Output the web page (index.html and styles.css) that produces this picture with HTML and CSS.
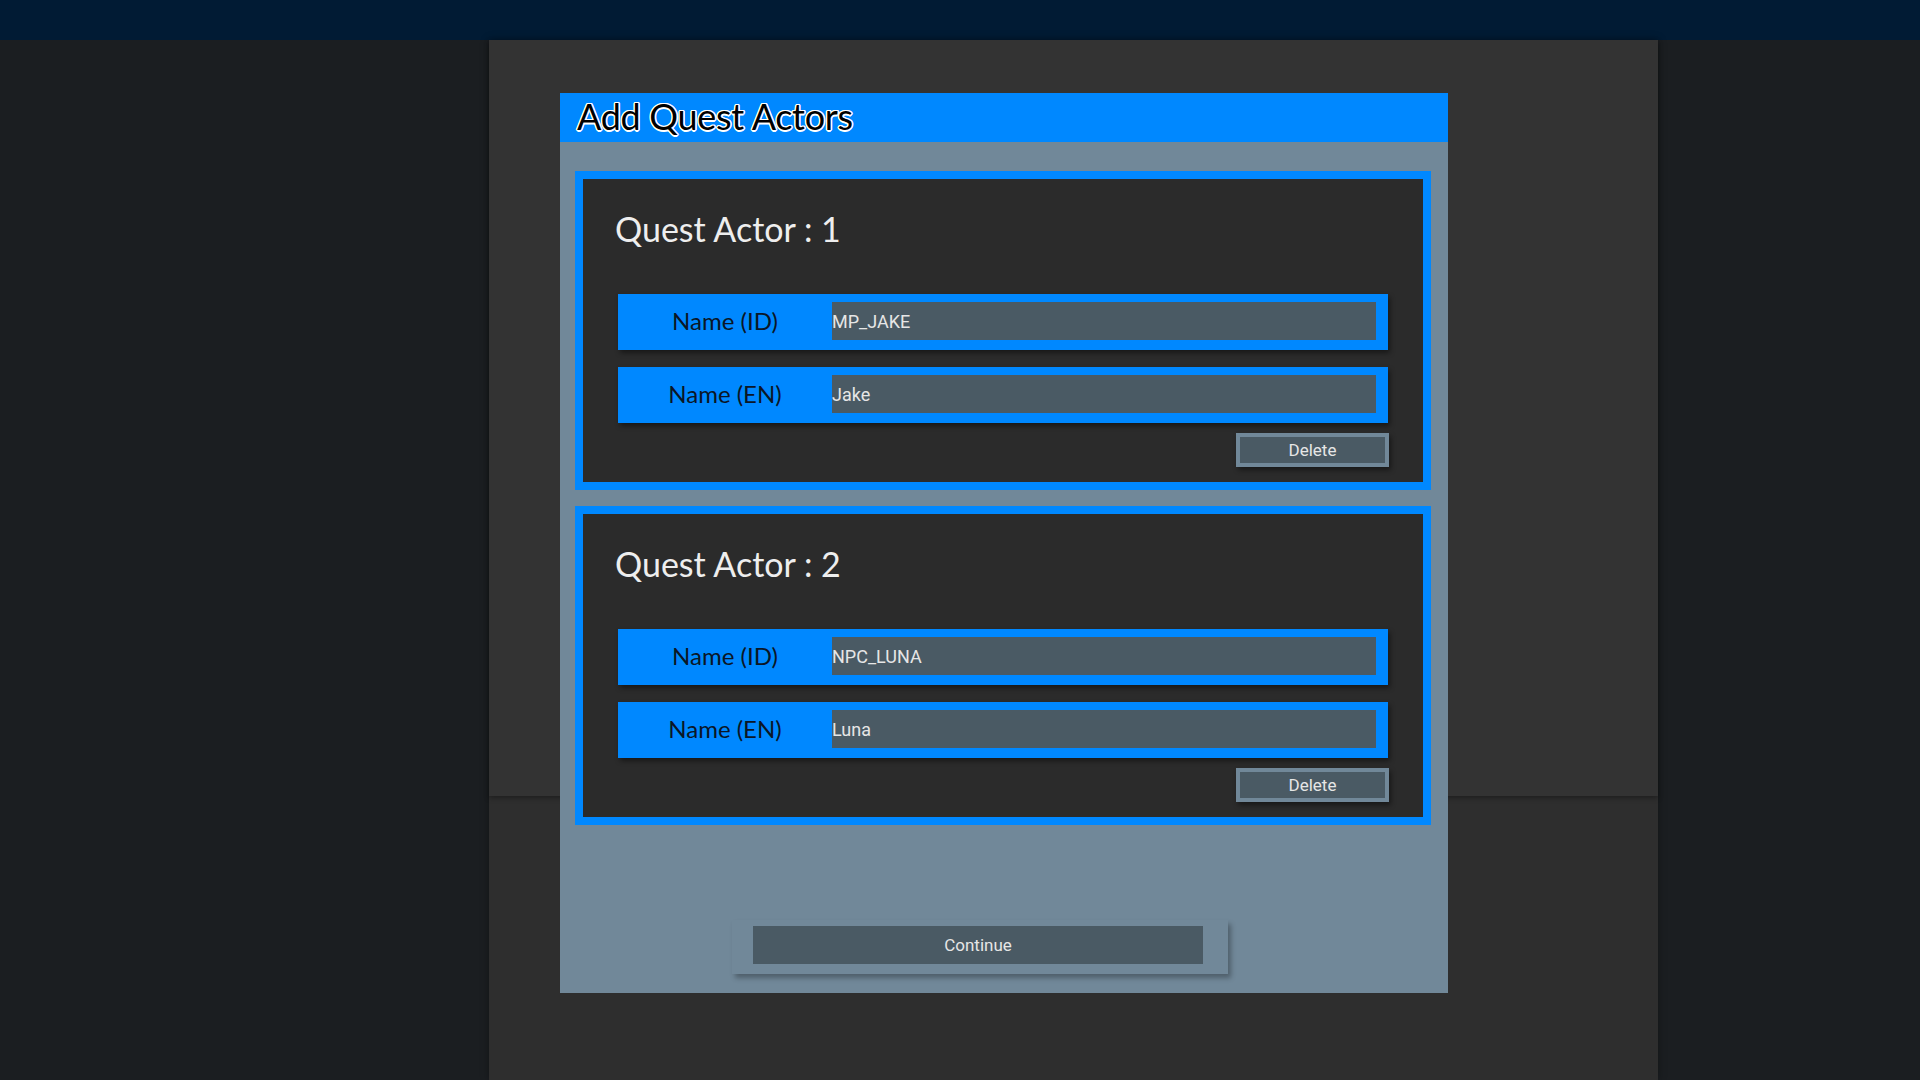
FILE: index.html
```html
<!DOCTYPE html>
<html>
<head>
    <meta charset="UTF-8">
    <title>Quest Editor</title>
    <link rel="stylesheet" href="styles.css">
</head>
<body>
    <div class="topBar"></div>
    <div class="main">
        <div class="side"></div>
        <div class="panel">
            <div class="panelTop"></div>
            <div class="panelBottom"></div>

            <div class="dialog">
                <div class="dialogHeader">Add Quest Actors</div>
                <div class="dialogBody">
                    <div class="actorCard">
                        <div class="actorTitle">Quest Actor : 1</div>
                        <div class="fields">
                            <div class="field">
                                <label>Name (ID)</label>
                                <input type="text" value="MP_JAKE" />
                            </div>
                            <div class="field">
                                <label>Name (EN)</label>
                                <input type="text" value="Jake" />
                            </div>
                        </div>
                        <div class="actions">
                            <button class="delete">Delete</button>
                        </div>
                    </div>
                    <div class="actorCard">
                        <div class="actorTitle">Quest Actor : 2</div>
                        <div class="fields">
                            <div class="field">
                                <label>Name (ID)</label>
                                <input type="text" value="NPC_LUNA" />
                            </div>
                            <div class="field">
                                <label>Name (EN)</label>
                                <input type="text" value="Luna" />
                            </div>
                        </div>
                        <div class="actions">
                            <button class="delete">Delete</button>
                        </div>
                    </div>
                    <div class="continueWrap">
                        <button class="continue">Continue</button>
                    </div>
                </div>
            </div>
        </div>
        <div class="side"></div>
    </div>
</body>
</html>
```

FILE: styles.css
```css
html, body {
    margin: 0;
    height: 100%;
}
body {
    background-color: #1b1e21;
    font-family: "Lato", "Noto Sans", sans-serif;
    overflow: hidden;
}
.topBar {
    height: 40px;
    background-color: #011b34;
}
.main {
    display: flex;
    height: 1040px;
}
.side {
    flex: 1;
}
.side:first-child {
    flex: 0 0 489px;
}
.panel {
    position: relative;
    width: 1169px;
    display: flex;
    flex-direction: column;
    background-color: #2e2e2e;
    box-shadow: 0 0 8px rgba(0, 0, 0, 0.35);
}
.panelTop {
    height: 756px;
    background-color: #333333;
    box-shadow: 0 2px 5px rgba(0, 0, 0, 0.35);
}
.panelBottom {
    flex: 1;
}

/* modal */
.dialog {
    position: absolute;
    left: 71px;
    top: 53px;
    width: 888px;
    background-color: #718899;
}
.dialogHeader {
    height: 49px;
    line-height: 47px;
    padding-left: 17px;
    background-color: #0088ff;
    color: #000;
    font-size: 36px;
    letter-spacing: -0.3px;
    text-shadow: 1.5px 0 0 #fff, -1.5px 0 0 #fff, 0 1.5px 0 #fff, 0 -1.5px 0 #fff,
        1px 1px 0 #fff, -1px -1px 0 #fff, 1px -1px 0 #fff, -1px 1px 0 #fff;
}
.dialogBody {
    padding: 29px 17px 19px 15px;
    display: flex;
    flex-direction: column;
    gap: 16px;
}
.actorCard {
    border: 8px solid #0088ff;
    background-color: #2b2b2b;
    padding: 30px 35px 15px 35px;
}
.actorTitle {
    color: #eeeeee;
    font-size: 34px;
    line-height: 40px;
    margin-bottom: 45px;
    margin-left: -3px;
}
.fields {
    display: flex;
    flex-direction: column;
    gap: 17px;
}
.field {
    display: flex;
    align-items: flex-start;
    height: 56px;
    padding: 8px 12px 0 0;
    box-sizing: border-box;
    background-color: #0088ff;
    box-shadow: 2px 3px 5px rgba(0, 0, 0, 0.45);
}
.field label {
    width: 214px;
    line-height: 38px;
    text-align: center;
    font-size: 24px;
    color: #0b1626;
}
.field input {
    flex: 1;
    height: 38px;
    box-sizing: border-box;
    border: none;
    padding: 0;
    background-color: #4a5a64;
    color: #e6e6e6;
    font-family: "Roboto", sans-serif;
    font-size: 18px;
    outline: none;
}
.actions {
    display: flex;
    justify-content: flex-end;
    margin-top: 10px;
}
.delete {
    width: 153px;
    height: 34px;
    border: 4px solid #718899;
    background-color: #4a5a64;
    color: #e6e6e6;
    font-family: "Roboto", sans-serif;
    font-size: 17px;
    box-shadow: 2px 3px 5px rgba(0, 0, 0, 0.45);
    margin-right: -1px;
}
.continueWrap {
    align-self: flex-start;
    margin: 79px 0 0 157px;
    padding: 6px 25px 10px 21px;
    box-shadow: 3px 4px 5px rgba(0, 0, 0, 0.3);
}
.continue {
    display: block;
    width: 450px;
    height: 38px;
    border: none;
    background-color: #4a5a64;
    color: #e6e6e6;
    font-family: "Roboto", sans-serif;
    font-size: 17px;
}
```
